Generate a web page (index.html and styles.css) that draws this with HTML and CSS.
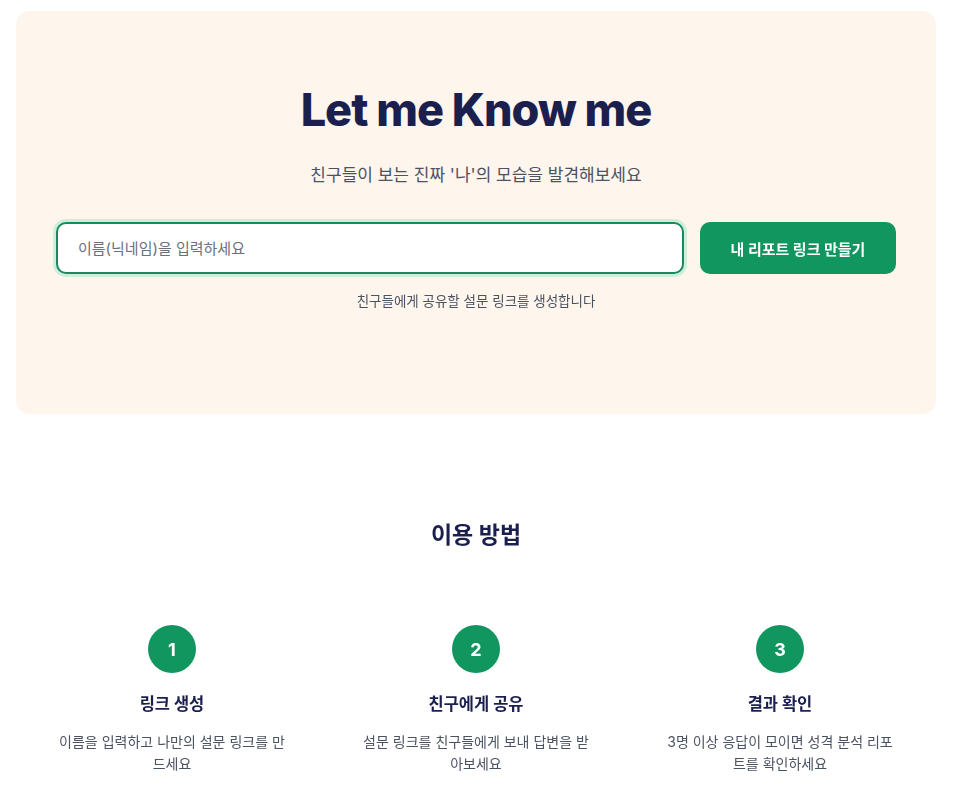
FILE: index.html
```html
<!DOCTYPE html>
<html lang="ko">
<head>
<meta charset="utf-8">
<title>Let me Know me</title>
<link rel="stylesheet" href="styles.css">
</head>
<body>
<main class="page">
  <section class="hero">
    <h1 class="hero-title">Let me Know me</h1>
    <p class="hero-sub">친구들이 보는 진짜 '나'의 모습을 발견해보세요</p>
    <form class="create-form">
      <input class="name-input" type="text" placeholder="이름(닉네임)을 입력하세요" autofocus>
      <button class="create-btn" type="button">내 리포트 링크 만들기</button>
    </form>
    <p class="hero-hint">친구들에게 공유할 설문 링크를 생성합니다</p>
  </section>

  <section class="howto">
    <h2 class="howto-title">이용 방법</h2>
    <div class="steps">
      <div class="step">
        <div class="step-num">1</div>
        <h3 class="step-title">링크 생성</h3>
        <p class="step-desc">이름을 입력하고 나만의 설문 링크를 만드세요</p>
      </div>
      <div class="step">
        <div class="step-num">2</div>
        <h3 class="step-title">친구에게 공유</h3>
        <p class="step-desc">설문 링크를 친구들에게 보내 답변을 받아보세요</p>
      </div>
      <div class="step">
        <div class="step-num">3</div>
        <h3 class="step-title">결과 확인</h3>
        <p class="step-desc">3명 이상 응답이 모이면 성격 분석 리포트를 확인하세요</p>
      </div>
    </div>
  </section>
</main>
</body>
</html>
```

FILE: styles.css
```css
* { box-sizing: border-box; }
html, body { margin: 0; padding: 0; background: #ffffff; }
body {
  font-family: Inter, "Noto Sans CJK KR", sans-serif;
  color: #1a1f4e;
}
.page {
  padding: 11px 18px 0 16px;
}
.hero {
  background: #fef5ec;
  border-radius: 14px;
  height: 403px;
  padding: 76px 40px 0;
  display: flex;
  flex-direction: column;
  align-items: center;
}
.hero-title {
  margin: 0;
  font-size: 45px;
  font-weight: 800;
  letter-spacing: -1px;
  line-height: 46px;
  color: #1a1f4e;
}
.hero-sub {
  margin: 30px 0 0;
  font-size: 17px;
  line-height: 24px;
  color: #4b5262;
}
.create-form {
  margin-top: 35px;
  width: 100%;
  display: flex;
  gap: 16px;
}
.name-input {
  flex: 1;
  height: 52px;
  border: 2px solid #1a8a5e;
  border-radius: 10px;
  background: #ffffff;
  padding: 0 20px;
  font-family: Inter, "Noto Sans CJK KR", sans-serif;
  font-size: 15px;
  color: #1a1f4e;
  outline: none;
  box-shadow: 0 0 0 3px #cdeedb;
}
.name-input::placeholder { color: #6b6f7a; }
.create-btn {
  width: 196px;
  height: 52px;
  border: none;
  border-radius: 10px;
  background: #129660;
  color: #ffffff;
  font-family: Inter, "Noto Sans CJK KR", sans-serif;
  font-size: 15px;
  font-weight: 700;
}
.hero-hint {
  margin: 18px 0 0;
  font-size: 13.5px;
  line-height: 18px;
  color: #4b5262;
}
.howto {
  padding: 106px 40px 0;
  display: flex;
  flex-direction: column;
  align-items: center;
}
.howto-title {
  margin: 0;
  font-size: 23px;
  font-weight: 700;
  line-height: 30px;
  color: #1a1f4e;
}
.steps {
  margin-top: 75px;
  width: 100%;
  display: grid;
  grid-template-columns: repeat(3, 1fr);
  gap: 72px;
}
.step {
  display: flex;
  flex-direction: column;
  align-items: center;
  text-align: center;
}
.step-num {
  width: 48px;
  height: 48px;
  border-radius: 50%;
  background: #129660;
  color: #ffffff;
  font-size: 18px;
  font-weight: 700;
  display: flex;
  align-items: center;
  justify-content: center;
}
.step-title {
  margin: 20px 0 0;
  font-size: 16.5px;
  font-weight: 700;
  line-height: 22px;
  color: #1a1f4e;
}
.step-desc {
  margin: 16px 0 0;
  font-size: 14px;
  line-height: 22px;
  color: #4b5262;
}
```
